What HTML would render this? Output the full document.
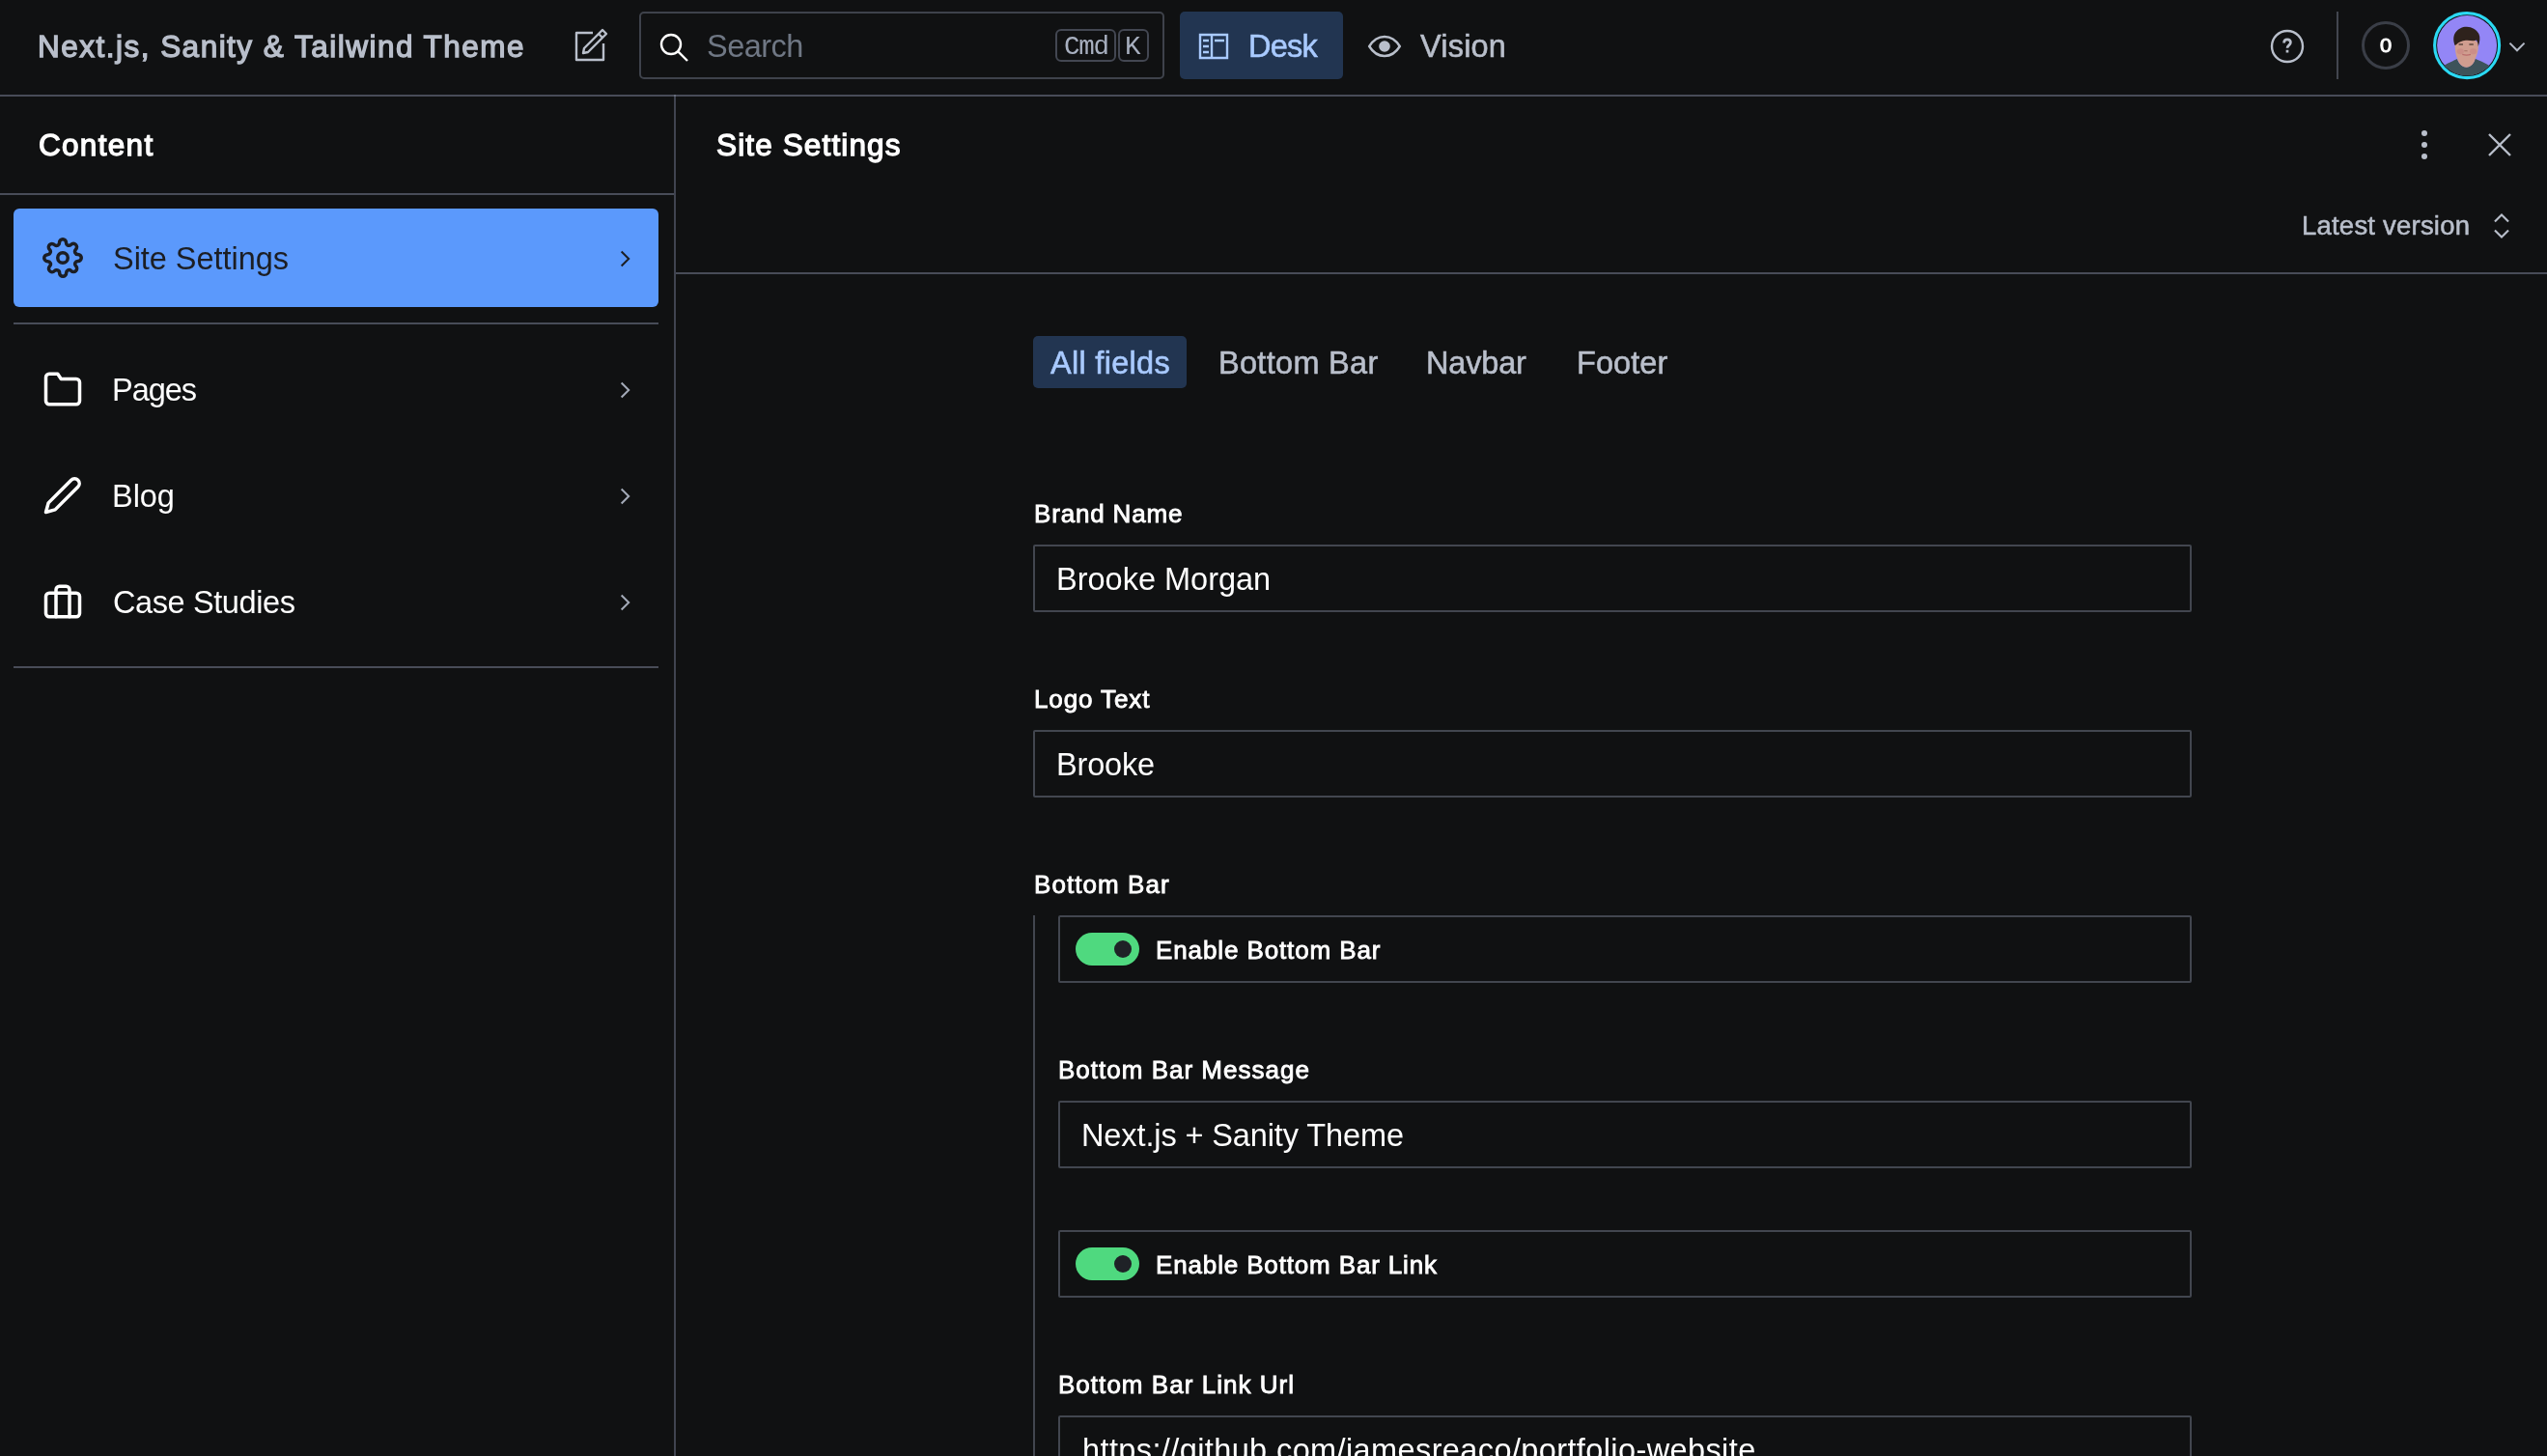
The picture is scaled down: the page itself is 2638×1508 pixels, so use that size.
<!DOCTYPE html>
<html lang="en">
<head>
<meta charset="utf-8">
<title>Site Settings – Next.js, Sanity &amp; Tailwind Theme</title>
<style>
html,body{margin:0;padding:0;background:#101112;}
body{width:2638px;height:1508px;position:relative;overflow:hidden;font-family:"Liberation Sans",Arial,sans-serif;color:#fff;}
.abs,.t,.ln,.box,svg{position:absolute;}
.t{will-change:transform;white-space:nowrap;line-height:1;font-size:33px;}
.sb{font-weight:400;-webkit-text-stroke:1.3px currentColor;}
.mono{font-family:"Liberation Mono","DejaVu Sans Mono",monospace;}
.ln{background:#484c58;}
.box{box-sizing:border-box;border:2px solid #42464f;border-radius:2px;}
.lbl{font-weight:400;color:#fff;-webkit-text-stroke:0.85px #fff;}
.muted{color:#b9bfcb;}
.md{-webkit-text-stroke:0.55px currentColor;}
#zero{transform:scaleX(1.12);transform-origin:0 50%;-webkit-text-stroke:0.9px currentColor;}
.tog{position:absolute;width:66px;height:34px;border-radius:17px;background:#4fd97f;}
.tog i{position:absolute;left:40px;top:8px;width:18px;height:18px;border-radius:9px;background:#1f2227;}
svg{overflow:visible;fill:none;}
.si{stroke-width:1.2;stroke:currentColor;}
.fi{stroke-width:2;stroke:currentColor;stroke-linecap:round;stroke-linejoin:round;}
/*FIT-START*/
#title{left:38.50px;top:32.74px;font-size:31.5px;letter-spacing:1.484px;}
#search{left:731.50px;top:32.49px;font-size:32.5px;letter-spacing:-0.520px;}
#desk{left:1293.00px;top:32.49px;font-size:32.5px;letter-spacing:-0.767px;}
#vision{left:1470.50px;top:32.49px;font-size:32.5px;letter-spacing:0.200px;}
#content{left:39.50px;top:134.74px;font-size:31.5px;letter-spacing:1.300px;}
#sshdr{left:741.50px;top:134.74px;font-size:31.5px;letter-spacing:1.133px;}
#li1{left:116.50px;top:252.29px;font-size:32.5px;letter-spacing:-0.033px;}
#li2{left:116.00px;top:388.19px;font-size:32.5px;letter-spacing:-1.025px;}
#li3{left:116.00px;top:498.19px;font-size:32.5px;letter-spacing:-0.033px;}
#li4{left:117.00px;top:608.29px;font-size:32.5px;letter-spacing:-0.400px;}
#latest{left:2383.50px;top:219.92px;font-size:27.5px;letter-spacing:0.215px;}
#tab1{left:1088.00px;top:360.19px;font-size:32.5px;letter-spacing:0.300px;}
#tab2{left:1261.50px;top:360.19px;font-size:32.5px;letter-spacing:0.300px;}
#tab3{left:1477.00px;top:360.19px;font-size:32.5px;letter-spacing:-0.180px;}
#tab4{left:1632.50px;top:360.19px;font-size:32.5px;letter-spacing:0.060px;}
#l_brand{left:1070.50px;top:519.19px;font-size:26px;letter-spacing:0.833px;}
#v_brand{left:1094.00px;top:583.79px;font-size:32.5px;letter-spacing:0.000px;}
#l_logo{left:1070.50px;top:711.19px;font-size:26px;letter-spacing:0.888px;}
#v_logo{left:1094.00px;top:775.79px;font-size:32.5px;letter-spacing:-0.160px;}
#l_bb{left:1070.50px;top:903.19px;font-size:26px;letter-spacing:1.067px;}
#l_ebb{left:1196.50px;top:970.79px;font-size:26px;letter-spacing:0.888px;}
#l_bbm{left:1096.00px;top:1095.09px;font-size:26px;letter-spacing:1.006px;}
#v_bbm{left:1120.00px;top:1159.89px;font-size:32.5px;letter-spacing:-0.110px;}
#l_ebbl{left:1196.50px;top:1296.89px;font-size:26px;letter-spacing:0.852px;}
#l_url{left:1096.00px;top:1421.09px;font-size:26px;letter-spacing:1.033px;}
#v_url{left:1121.00px;top:1485.89px;font-size:32.5px;letter-spacing:0.391px;}
#cmd{left:1101.50px;top:35.21px;font-size:27.5px;letter-spacing:-1.250px;}
#kk{left:1165.00px;top:35.21px;font-size:27.5px;letter-spacing:0.000px;}
#zero{left:2465.00px;top:37.89px;font-size:19.5px;letter-spacing:0.000px;}
/*FIT-END*/
</style>
</head>
<body>

<!-- ============ NAVBAR ============ -->
<div id="title" class="t sb muted">Next.js, Sanity &amp; Tailwind Theme</div>

<!-- compose icon -->
<svg class="si muted" style="left:586px;top:23px;" width="50" height="50" viewBox="0 0 25 25"><path d="M17 6L19 8M14 5.5H5.5V19.5H19.5V11M9 16L9.5 13.5L19 4L21 6L11.5 15.5L9 16Z" stroke-linejoin="round"/></svg>

<!-- search box -->
<div class="box" style="left:662px;top:12px;width:544px;height:70px;border-radius:5px;border-color:#3e424b;"></div>
<svg class="si" style="left:672px;top:23px;color:#fff;" width="50" height="50" viewBox="0 0 25 25"><path d="M15.0355 15.0355L20 20M16.5 11.5C16.5 14.2614 14.2614 16.5 11.5 16.5C8.73858 16.5 6.5 14.2614 6.5 11.5C6.5 8.73858 8.73858 6.5 11.5 6.5C14.2614 6.5 16.5 8.73858 16.5 11.5Z"/></svg>
<div id="search" class="t" style="color:#6f7784;">Search</div>
<div class="box" style="left:1093px;top:30px;width:63px;height:34px;border-radius:6px;border-color:#434752;"></div>
<div class="box" style="left:1158px;top:30px;width:32px;height:34px;border-radius:6px;border-color:#434752;"></div>
<div id="cmd" class="t mono" style="color:#a7afbf;">Cmd</div>
<div id="kk" class="t mono" style="color:#a7afbf;">K</div>

<!-- Desk / Vision -->
<div class="abs" style="left:1222px;top:12px;width:169px;height:70px;border-radius:5px;background:#223551;"></div>
<svg class="si" style="left:1232px;top:23px;color:#a9caff;" width="50" height="50" viewBox="0 0 25 25"><path d="M7 9.5H10M7 12.5H10M7 15.5H10M11.5 6.5V18.5M13 9.5H18M5.5 6.5H19.5V18.5H5.5V6.5Z"/></svg>
<div id="desk" class="t md" style="color:#a9caff;">Desk</div>
<svg class="si muted" style="left:1409px;top:23px;" width="50" height="50" viewBox="0 0 25 25"><path d="M4.6 12.5C6.5 9.4 9.2 7.5 12.5 7.5C15.8 7.5 18.5 9.4 20.4 12.5C18.5 15.6 15.8 17.5 12.5 17.5C9.2 17.5 6.5 15.6 4.6 12.5Z"/><circle cx="12.5" cy="12.5" r="2.9" fill="currentColor" stroke="none"/></svg>
<div id="vision" class="t md muted">Vision</div>

<!-- right side -->
<svg class="si muted" style="left:2344px;top:23px;" width="50" height="50" viewBox="0 0 25 25"><circle cx="12.5" cy="12.5" r="8"/><path d="M10.8 10.7C10.8 9.6 11.5 8.9 12.5 8.9C13.5 8.9 14.2 9.55 14.2 10.5C14.2 11.95 12.5 11.9 12.5 13.4M12.5 14.4V15.7" stroke-width="1.35"/></svg>
<div class="ln" style="left:2420px;top:12px;width:2px;height:70px;background:#42464f;"></div>
<div class="abs" style="left:2446px;top:22px;width:50px;height:50px;box-sizing:border-box;border:3px solid #3a3e47;border-radius:50%;"></div>
<div id="zero" class="t sb">0</div>

<!-- avatar -->
<svg style="left:2520px;top:12px;" width="70" height="70" viewBox="0 0 70 70">
  <defs><clipPath id="avc"><circle cx="35.1" cy="35.1" r="31.3"/></clipPath><filter id="avb" x="-10%" y="-10%" width="120%" height="120%"><feGaussianBlur stdDeviation="0.55"/></filter></defs>
  <circle cx="35.1" cy="35.1" r="33.5" stroke="#2bd9f3" stroke-width="3.1"/>
  <circle cx="35.1" cy="35.1" r="31" fill="#9386f6"/>
  <g clip-path="url(#avc)">
    <g filter="url(#avb)">
      <path d="M3 72L7.5 58.5C12 54.5 20 51.5 25 49C26 53 30 57.5 34.6 57.6C39 57.5 43 53 43.5 48.8C49 51.3 57 54.3 61.5 58.5L67 72Z" fill="#3e525a"/>
      <path d="M22.7 33L22.8 38C23.1 43 24.4 47 25.3 49C26 53.2 30 57.6 34.6 57.7C39 57.6 43 53.2 43.6 49C45 46 46.5 42 46.8 38L46.9 33C44 27 26 27 22.7 33Z" fill="#d09d8f"/>
      <ellipse cx="28.3" cy="41.2" rx="3.6" ry="3" fill="#c98a84" opacity="0.75"/>
      <ellipse cx="41.6" cy="41.2" rx="3.6" ry="3" fill="#c98a84" opacity="0.75"/>
      <path d="M22.6 35C20.8 30.5 20.6 25.3 23.3 21.5C26.3 17.2 31 15.5 35 15.7C40 15.9 45 18.4 47.4 23C49.2 27 48.3 31.5 46.8 36C46.6 33 46 31 44.9 29.6C41.5 31 37.5 29.3 33.8 29.8C30 30.3 26.3 31.8 24 34.2C23.4 34.5 23 34.8 22.6 35Z" fill="#2e211c"/>
      <path d="M26.6 33.9H31M37.4 33.9H41.8" stroke="#5d463f" stroke-width="1.5"/>
      <path d="M32.3 40.7H35.6" stroke="#a87468" stroke-width="1.1"/>
      <path d="M30.3 44.4C33 45.2 36.4 45.2 39 44.4" stroke="#b96d6c" stroke-width="1.3"/>
    </g>
  </g>
</svg>
<svg class="si" style="left:2586px;top:27px;color:#b3b9c6;" width="42" height="42" viewBox="0 0 25 25"><path d="M17 10.5L12.5 15L8 10.5"/></svg>

<div class="ln" style="left:0;top:98px;width:2638px;height:2px;"></div>

<!-- ============ LEFT PANE ============ -->
<div id="content" class="t sb">Content</div>
<div class="ln" style="left:0;top:200px;width:698px;height:2px;"></div>
<div class="ln" style="left:698px;top:98px;width:2px;height:1410px;background:#404450;"></div>
<div class="ln" style="left:698px;top:98px;width:2px;height:2px;background:#666c7b;"></div>

<div class="abs" style="left:14px;top:216px;width:668px;height:102px;border-radius:6px;background:#5b99fc;"></div>
<svg class="fi" style="left:44px;top:246px;color:#1c1e24;" width="42" height="42" viewBox="0 0 24 24"><circle cx="12" cy="12" r="3"/><path d="M19.4 15a1.65 1.65 0 0 0 .33 1.82l.06.06a2 2 0 0 1 0 2.83 2 2 0 0 1-2.83 0l-.06-.06a1.65 1.65 0 0 0-1.82-.33 1.65 1.65 0 0 0-1 1.51V21a2 2 0 0 1-2 2 2 2 0 0 1-2-2v-.09A1.65 1.65 0 0 0 9 19.4a1.65 1.65 0 0 0-1.82.33l-.06.06a2 2 0 0 1-2.83 0 2 2 0 0 1 0-2.83l.06-.06a1.65 1.65 0 0 0 .33-1.82 1.65 1.65 0 0 0-1.51-1H3a2 2 0 0 1-2-2 2 2 0 0 1 2-2h.09A1.65 1.65 0 0 0 4.6 9a1.65 1.65 0 0 0-.33-1.82l-.06-.06a2 2 0 0 1 0-2.83 2 2 0 0 1 2.83 0l.06.06a1.65 1.65 0 0 0 1.82.33H9a1.65 1.65 0 0 0 1-1.51V3a2 2 0 0 1 2-2 2 2 0 0 1 2 2v.09a1.65 1.65 0 0 0 1 1.51 1.65 1.65 0 0 0 1.82-.33l.06-.06a2 2 0 0 1 2.83 0 2 2 0 0 1 0 2.83l-.06.06a1.65 1.65 0 0 0-.33 1.82V9a1.65 1.65 0 0 0 1.51 1H21a2 2 0 0 1 2 2 2 2 0 0 1-2 2h-.09a1.65 1.65 0 0 0-1.51 1z"/></svg>
<div id="li1" class="t" style="color:#1c1e24;">Site Settings</div>
<svg class="si" style="left:626px;top:247px;color:#1c1e24;" width="42" height="42" viewBox="0 0 25 25"><path d="M10.5 8L15 12.5L10.5 17"/></svg>

<div class="ln" style="left:14px;top:334px;width:668px;height:2px;"></div>

<svg class="fi" style="left:44px;top:382px;color:#fff;" width="42" height="42" viewBox="0 0 24 24"><path d="M22 19a2 2 0 0 1-2 2H4a2 2 0 0 1-2-2V5a2 2 0 0 1 2-2h5l2 3h9a2 2 0 0 1 2 2z"/></svg>
<div id="li2" class="t">Pages</div>
<svg class="si" style="left:626px;top:383px;color:#a3aab8;" width="42" height="42" viewBox="0 0 25 25"><path d="M10.5 8L15 12.5L10.5 17"/></svg>

<svg class="fi" style="left:44px;top:492px;color:#fff;" width="42" height="42" viewBox="0 0 24 24"><path d="M17 3a2.828 2.828 0 1 1 4 4L7.5 20.5 2 22l1.5-5.5L17 3z"/></svg>
<div id="li3" class="t">Blog</div>
<svg class="si" style="left:626px;top:493px;color:#a3aab8;" width="42" height="42" viewBox="0 0 25 25"><path d="M10.5 8L15 12.5L10.5 17"/></svg>

<svg class="fi" style="left:44px;top:602px;color:#fff;" width="42" height="42" viewBox="0 0 24 24"><rect x="2" y="7" width="20" height="14" rx="2" ry="2"/><path d="M16 21V5a2 2 0 0 0-2-2h-4a2 2 0 0 0-2 2v16"/></svg>
<div id="li4" class="t">Case Studies</div>
<svg class="si" style="left:626px;top:603px;color:#a3aab8;" width="42" height="42" viewBox="0 0 25 25"><path d="M10.5 8L15 12.5L10.5 17"/></svg>

<div class="ln" style="left:14px;top:690px;width:668px;height:2px;"></div>

<!-- ============ RIGHT PANE ============ -->
<div id="sshdr" class="t sb">Site Settings</div>
<svg style="left:2486px;top:125px;color:#b9bfcb;" width="50" height="50" viewBox="0 0 25 25"><circle cx="12.5" cy="6.5" r="1.5" fill="currentColor"/><circle cx="12.5" cy="12.5" r="1.5" fill="currentColor"/><circle cx="12.5" cy="18.5" r="1.5" fill="currentColor"/></svg>
<svg class="si muted" style="left:2564px;top:125px;" width="50" height="50" viewBox="0 0 25 25"><path d="M18 7L7 18M7 7L18 18"/></svg>

<div id="latest" class="t md muted">Latest version</div>
<svg class="si muted" style="left:2569px;top:212px;" width="44" height="44" viewBox="0 0 25 25"><path d="M16.5 10L12.5 6L8.5 10M16.5 15L12.5 19L8.5 15"/></svg>
<div class="ln" style="left:700px;top:282px;width:1938px;height:2px;"></div>

<!-- tabs -->
<div class="abs" style="left:1070px;top:348px;width:159px;height:54px;border-radius:5px;background:#223551;"></div>
<div id="tab1" class="t md" style="color:#a9caff;">All fields</div>
<div id="tab2" class="t md muted">Bottom Bar</div>
<div id="tab3" class="t md muted">Navbar</div>
<div id="tab4" class="t md muted">Footer</div>

<!-- fields -->
<div id="l_brand" class="t lbl">Brand Name</div>
<div class="box" style="left:1070px;top:564px;width:1200px;height:70px;"></div>
<div id="v_brand" class="t">Brooke Morgan</div>

<div id="l_logo" class="t lbl">Logo Text</div>
<div class="box" style="left:1070px;top:756px;width:1200px;height:70px;"></div>
<div id="v_logo" class="t">Brooke</div>

<div id="l_bb" class="t lbl">Bottom Bar</div>
<div class="ln" style="left:1070px;top:948px;width:2px;height:560px;background:#42464f;"></div>

<div class="box" style="left:1096px;top:948px;width:1174px;height:70px;"></div>
<div class="tog" style="left:1114px;top:966px;"><i></i></div>
<div id="l_ebb" class="t lbl">Enable Bottom Bar</div>

<div id="l_bbm" class="t lbl">Bottom Bar Message</div>
<div class="box" style="left:1096px;top:1140px;width:1174px;height:70px;"></div>
<div id="v_bbm" class="t">Next.js + Sanity Theme</div>

<div class="box" style="left:1096px;top:1274px;width:1174px;height:70px;"></div>
<div class="tog" style="left:1114px;top:1292px;"><i></i></div>
<div id="l_ebbl" class="t lbl">Enable Bottom Bar Link</div>

<div id="l_url" class="t lbl">Bottom Bar Link Url</div>
<div class="box" style="left:1096px;top:1466px;width:1174px;height:70px;"></div>
<div id="v_url" class="t">https://github.com/jamesreaco/portfolio-website</div>

</body>
</html>
